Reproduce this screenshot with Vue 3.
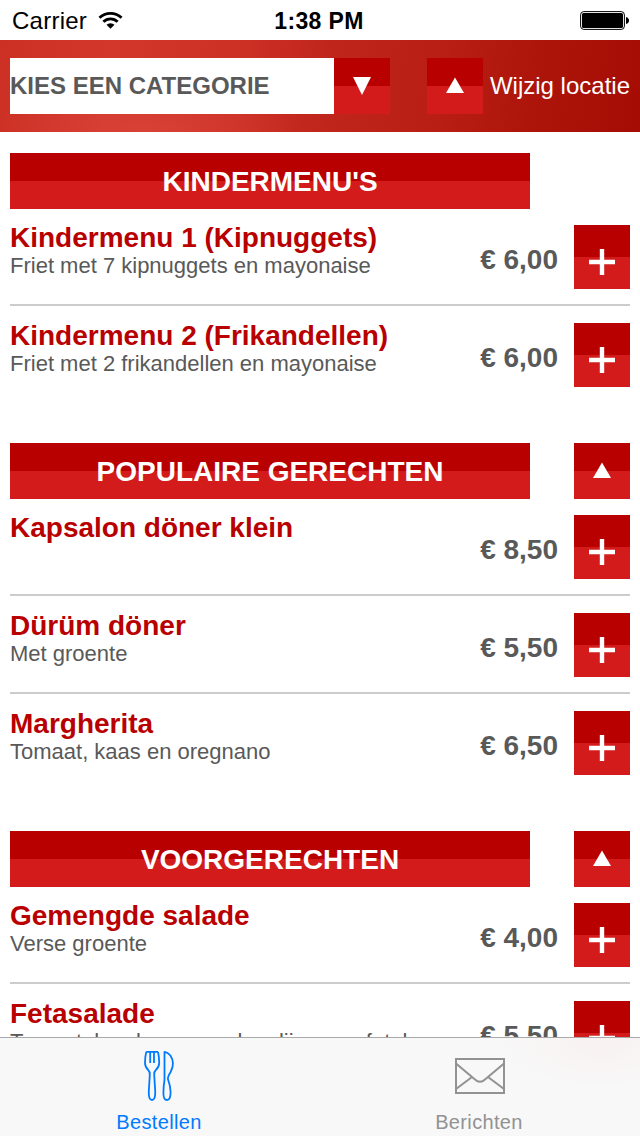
<script setup>
const sections = [
  {
    title: "KINDERMENU'S",
    up: false,
    items: [
      { name: 'Kindermenu 1 (Kipnuggets)', info: 'Friet met 7 kipnuggets en mayonaise', price: '6,00' },
      { name: 'Kindermenu 2 (Frikandellen)', info: 'Friet met 2 frikandellen en mayonaise', price: '6,00' },
    ],
  },
  {
    title: 'POPULAIRE GERECHTEN',
    up: true,
    items: [
      { name: 'Kapsalon döner klein', info: '', price: '8,50' },
      { name: 'Dürüm döner', info: 'Met groente', price: '5,50' },
      { name: 'Margherita', info: 'Tomaat, kaas en oregnano', price: '6,50' },
    ],
  },
  {
    title: 'VOORGERECHTEN',
    up: true,
    items: [
      { name: 'Gemengde salade', info: 'Verse groente', price: '4,00' },
      { name: 'Fetasalade', info: 'Tomaat, komkommer, sla, olijven en fetakaas', price: '5,50' },
    ],
  },
]
</script>

<template>
  <div class="screen">
    <div class="status">
      <div class="carrier">
        <span>Carrier</span>
        <svg width="25" height="19" viewBox="0 0 26 20">
          <g fill="none" stroke="#000" stroke-width="3">
            <path d="M1.4 7.2 A16.5 16.5 0 0 1 24.6 7.2" />
            <path d="M5.5 11.4 A10.6 10.6 0 0 1 20.5 11.4" />
          </g>
          <path d="M8.8 14.6 A6 6 0 0 1 17.2 14.6 L13 18.8 Z" />
        </svg>
      </div>
      <div class="clock">1:38 PM</div>
      <svg class="battery" width="50" height="20" viewBox="0 0 50 20">
        <rect x="0.6" y="0.6" width="43.8" height="17.8" rx="3.2" fill="none" stroke="#000" stroke-width="1" />
        <rect x="2" y="2" width="41" height="15" rx="1.6" />
        <path d="M46 6 Q49 7 49 9.5 Q49 12 46 13 Z" />
      </svg>
    </div>

    <header class="top">
      <div class="select">KIES EEN CATEGORIE</div>
      <button class="square">
        <svg width="18" height="18" viewBox="0 0 18 18"><path d="M0 0H18L9 18Z" fill="#fff" /></svg>
      </button>
      <button class="square location">
        <svg class="raised" width="18" height="16" viewBox="0 0 18 16"><path d="M0 16H18L9 0.4Z" fill="#fff" /></svg>
      </button>
      <span class="change">Wijzig locatie</span>
    </header>

    <main class="menu">
      <section v-for="s in sections" :key="s.title" class="section">
        <div class="heading">
          <h2>{{ s.title }}</h2>
          <button v-if="s.up" class="square">
            <svg class="raised" width="18" height="16" viewBox="0 0 18 16"><path d="M0 16H18L9 0.4Z" fill="#fff" /></svg>
          </button>
        </div>
        <article v-for="i in s.items" :key="i.name" class="item">
          <div class="text">
            <h3>{{ i.name }}</h3>
            <p>{{ i.info }}</p>
          </div>
          <div class="price">€ {{ i.price }}</div>
          <button class="add">
            <svg width="26" height="26" viewBox="0 0 26 26"><path d="M0 13H26M13 0V26" stroke="#fff" stroke-width="4.4" /></svg>
          </button>
        </article>
      </section>
    </main>

    <nav class="tabs">
      <div class="tab active">
        <svg width="30" height="52" viewBox="1 0 30 52" fill="none" stroke="#007aff" stroke-width="1.8" stroke-linejoin="round">
          <path d="M3.2 1.9 Q2 7 2 13 Q2 17 5.2 20 Q6.9 21.4 6.8 25 L5.8 41 Q5.4 50 9 50 Q12.6 50 12.2 41 L11.2 25 Q11.1 21.4 12.8 20 Q16.2 17 16.2 13 Q16.2 7 15 1.9 M3.2 1.9 H7.2 V13 M7.2 1.9 H11 V13 M15 1.9 H11" />
          <path d="M21.5 1.9 V30 Q20.4 36 20.4 43 Q20.4 50 24 50 Q27.6 50 27.6 42 Q27.4 36 24.8 28.5 Q25 26 27.6 22 Q32.4 13 27.4 5.5 Q24.8 2.4 21.5 1.9Z" />
        </svg>
        <span>Bestellen</span>
      </div>
      <div class="tab">
        <svg class="mail" width="50" height="52" viewBox="0 0 50 52" fill="none" stroke="#929292" stroke-width="2">
          <rect x="1" y="9" width="48" height="34" />
          <path d="M1 13.5 L20 29.5 Q25 34 30 29.5 L49 13.5 M1 39 L17 27 M49 39 L33 27" />
        </svg>
        <span>Berichten</span>
      </div>
    </nav>
  </div>
</template>

<style>
body { margin: 0; background: #fff; }
</style>

<style scoped>
.screen {
  width: 640px;
  height: 1136px;
  display: flex;
  flex-direction: column;
  overflow: hidden;
  position: relative;
  background: #fff;
  font-family: "Liberation Sans", Arial, sans-serif;
}
button { border: 0; padding: 0; margin: 0; display: flex; align-items: center; justify-content: center; }
svg { display: block; }
h2, h3, p { margin: 0; }
.status {
  flex: none;
  height: 40px;
  box-sizing: border-box;
  padding: 2px 10px 0 12px;
  display: grid;
  grid-template-columns: 1fr auto 1fr;
  align-items: center;
  font-size: 24px;
  color: #000;
}
.carrier { display: flex; align-items: center; gap: 11px; letter-spacing: 0.25px; }
.carrier svg { margin-bottom: 2px; }
.clock { font-weight: bold; font-size: 23px; letter-spacing: 0.35px; margin-right: 4px; }
.battery { justify-self: end; }
.top {
  flex: none;
  height: 92px;
  box-sizing: border-box;
  padding: 0 10px;
  display: flex;
  align-items: center;
  background:
    radial-gradient(ellipse 150px 55px at 145px 92px, rgba(218, 68, 58, 0.8), rgba(218, 68, 58, 0)),
    linear-gradient(97deg, #cc3025 0%, #d3372c 17%, #cc2f24 38%, #bf251b 52%, #b81e14 69%, #ad140a 83%, #a50d04 100%);
}
.select {
  width: 324px;
  height: 56px;
  line-height: 56px;
  background: #fff;
  color: #595959;
  font-size: 24px;
  font-weight: bold;
}
.square {
  flex: none;
  width: 56px;
  height: 56px;
  background: linear-gradient(#b90000 50%, #d31b1b 50%);
}
.raised { margin-bottom: 2px; }
.location { margin-left: 37px; }
.change { margin-left: 7px; color: #fff; font-size: 24px; white-space: nowrap; }
.menu { flex: 1; min-height: 0; padding: 21px 10px 0; }
.section { margin-bottom: 56px; }
.heading { display: flex; justify-content: space-between; }
h2 {
  width: 520px;
  height: 56px;
  line-height: 58px;
  text-align: center;
  color: #fff;
  font-size: 28px;
  font-weight: bold;
  background: linear-gradient(#b90000 50%, #d31b1b 50%);
}
.item {
  display: flex;
  height: 64px;
  padding: 16px 0 15px;
  border-bottom: 2px solid #ccc;
  margin-bottom: 1px;
}
.item:last-child { padding-bottom: 0; border: 0; margin: 0; }
.text { flex: 1; min-width: 0; white-space: nowrap; }
h3 { height: 28px; line-height: 26px; font-size: 28px; color: #b90000; }
p { height: 26px; line-height: 26px; font-size: 22px; color: #595959; }
.price { line-height: 70px; margin-right: 16px; font-size: 28px; font-weight: bold; color: #595959; }
.add {
  flex: none;
  width: 56px;
  height: 64px;
  box-sizing: border-box;
  padding-top: 10px;
  background: linear-gradient(#b90000 50%, #d31b1b 50%);
}
.tabs {
  position: absolute;
  left: 0;
  right: 0;
  bottom: 0;
  height: 98px;
  border-top: 1px solid #a9a9a9;
  background: radial-gradient(ellipse 100px 50px at 600px 0, #f8f1f0, #f8f8f8);
  display: grid;
  grid-template-columns: 318px 322px;
}
.tab { display: flex; flex-direction: column; align-items: center; padding-top: 12px; color: #929292; font-size: 20px; letter-spacing: 0.35px; }
.tab span { margin-top: 8px; line-height: 24px; }
.mail { margin-left: 2px; }
.active { color: #007aff; }
</style>
